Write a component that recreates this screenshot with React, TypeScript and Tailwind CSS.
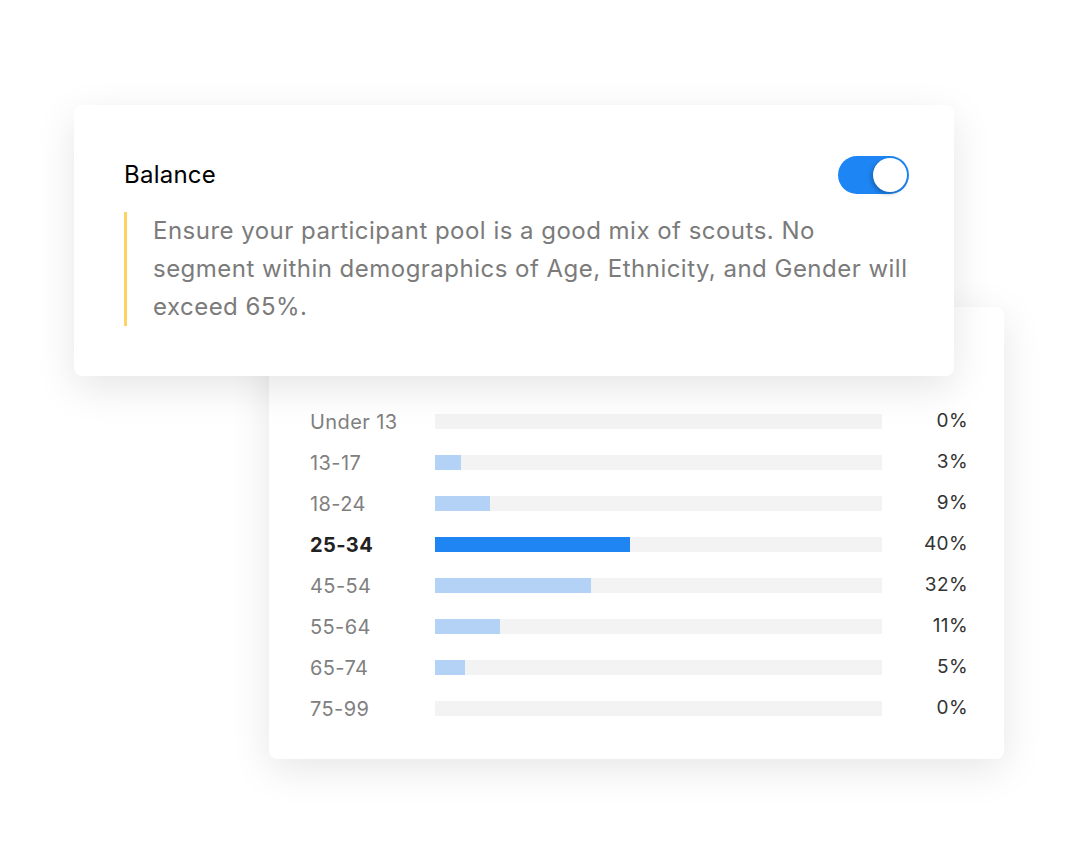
import React from 'react';

interface AgeRow {
  label: string;
  pct: number;
  fill: number; // bar fill in px out of 447
  active?: boolean;
}

const ROWS: AgeRow[] = [
  { label: 'Under 13', pct: 0, fill: 0 },
  { label: '13-17', pct: 3, fill: 26 },
  { label: '18-24', pct: 9, fill: 55 },
  { label: '25-34', pct: 40, fill: 195, active: true },
  { label: '45-54', pct: 32, fill: 156 },
  { label: '55-64', pct: 11, fill: 65 },
  { label: '65-74', pct: 5, fill: 30 },
  { label: '75-99', pct: 0, fill: 0 },
];

const Toggle: React.FC<{ on: boolean }> = ({ on }) => (
  <div
    className={`relative w-[71px] h-[38px] rounded-full ${on ? 'bg-[#1e86f4]' : 'bg-gray-200'}`}
  >
    <div className="absolute right-[2px] top-[2px] w-[34px] h-[34px] rounded-full bg-white shadow-[-2px_2px_4px_rgba(0,0,0,0.25)]" />
  </div>
);

export default function App() {
  return (
    <div
      className="relative w-[1080px] h-[864px] bg-white overflow-hidden"
      style={{ fontFamily: 'Inter, "Noto Sans", sans-serif' }}
    >
      {/* Age distribution card */}
      <div className="ml-[269px] mt-[307px] w-[735px] rounded-[8px] bg-white pt-[94px] pb-[30px] pl-[41px] pr-[36px] shadow-[0_10px_40px_rgba(0,0,0,0.10)]">
        {ROWS.map((row) => (
          <div key={row.label} className="flex items-center h-[41px]">
            <div
              className={`w-[125px] text-[20px] tracking-[0.02em] ${
                row.active ? 'font-bold text-[#222]' : 'text-[#808080]'
              }`}
            >
              {row.label}
            </div>
            <div className="w-[447px] h-[15px] bg-[#f3f3f3]">
              {row.fill > 0 && (
                <div
                  className={`h-full ${row.active ? 'bg-[#1e85f2]' : 'bg-[#b4d2f6]'}`}
                  style={{ width: row.fill }}
                />
              )}
            </div>
            <div className="flex-1 text-right text-[19px] text-[#333] tracking-[0.02em]">{row.pct}%</div>
          </div>
        ))}
      </div>

      {/* Balance card */}
      <div className="absolute left-[74px] top-[105px] w-[880px] h-[271px] rounded-[8px] bg-white pl-[50px] pr-[45px] pt-[51px] shadow-[0_12px_40px_rgba(0,0,0,0.10)]">
        <div className="flex items-center justify-between">
          <div className="text-[24px] text-black tracking-[0.01em]">Balance</div>
          <Toggle on />
        </div>
        <div className="mt-[22px] border-l-[3px] border-[#fdd365] pl-[26px] -mr-[12px]">
          <p className="text-[24px] leading-[38px] text-[#7b7b7b] tracking-[0.02em] -mt-[4px] -mb-[7px]">
            Ensure your participant pool is a good mix of scouts. No segment within demographics of Age,
            Ethnicity, and Gender will exceed 65%.
          </p>
        </div>
      </div>
    </div>
  );
}
